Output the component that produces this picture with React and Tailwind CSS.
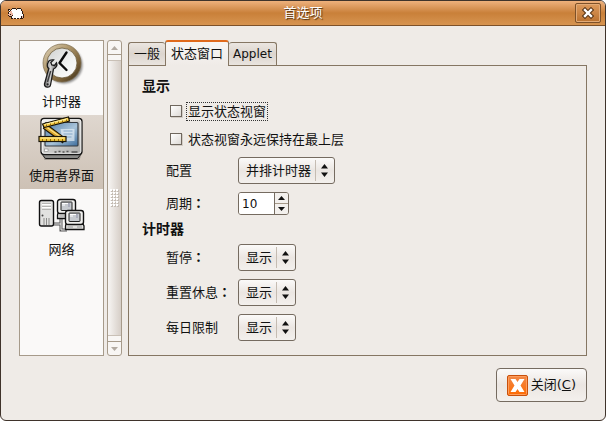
import React, { useState } from 'react'
import { clsx } from 'clsx'

const SHEEP = [
  '....kkkk.kkkk...',
  'kk.kwwwwkwwwwk..',
  'kwkwwwwwwwwwwk..',
  '.kppwwwwwwwwwwk.',
  'kwppwwwwwwwwwwk.',
  'kppppwwwwwwwwwk.',
  'ppkppwwwwwwwwwwk',
  'kpppkwwwwwwwwwwk',
  '.kkkwwwwwwwwwkpk',
  '...kwwwwwwwwwkpk',
  '...kkpkkwkkpkkk.',
]
const SHEEP_COLORS = { k: '#2a1a10', w: '#ffffff', p: '#f0b8a4' }

function SheepIcon() {
  return (
    <svg width="16" height="11" viewBox="0 0 16 11" shapeRendering="crispEdges" aria-hidden="true">
      {SHEEP.map((row, y) =>
        [...row].map((c, x) =>
          c === '.' ? null : <rect key={`${x}-${y}`} x={x} y={y} width="1" height="1" fill={SHEEP_COLORS[c]} />
        )
      )}
    </svg>
  )
}

function ClockIcon() {
  return (
    <svg width="48" height="48" viewBox="0 0 48 48" aria-hidden="true">
      <defs>
        <linearGradient id="rim" x1="0" y1="0" x2="1" y2="1">
          <stop offset="0" stopColor="#e4dac4" />
          <stop offset="0.35" stopColor="#b39c72" />
          <stop offset="0.7" stopColor="#7a6138" />
          <stop offset="1" stopColor="#2f2516" />
        </linearGradient>
        <linearGradient id="face" x1="0" y1="0" x2="1" y2="1">
          <stop offset="0" stopColor="#cfd1d0" />
          <stop offset="0.6" stopColor="#f1f2f1" />
          <stop offset="1" stopColor="#ffffff" />
        </linearGradient>
        <linearGradient id="steel" x1="0" y1="0" x2="1" y2="0">
          <stop offset="0" stopColor="#6f6f6f" />
          <stop offset="0.5" stopColor="#d4d4d4" />
          <stop offset="1" stopColor="#555555" />
        </linearGradient>
        <filter id="soft" x="-20%" y="-20%" width="140%" height="140%">
          <feGaussianBlur stdDeviation="1.3" />
        </filter>
      </defs>
      <circle cx="26" cy="24" r="18.5" fill="#000" opacity="0.45" filter="url(#soft)" />
      <circle cx="24" cy="22" r="19" fill="url(#rim)" stroke="#7b6a4a" strokeWidth="0.7" />
      <circle cx="24" cy="22" r="15" fill="url(#face)" stroke="#6b5a3a" strokeWidth="0.8" />
      <path d="M28.500 11.500L21.500 22L28.500 29" fill="none" stroke="#0a0a0a" strokeWidth="2.4" strokeLinecap="round" strokeLinejoin="round" />
      <path
        d="M10 21.500C10.500 19.500 13 18.500 15.500 19L12.800 21.500L13.800 24L16.500 24.500L18.500 21.800C19.500 24 18.500 27 15.500 28L12.500 44C12 47 6 47 6.500 43L10.800 27.500C9 26 9 23.500 10 21.500Z"
        fill="url(#steel)"
        stroke="#1c1c1c"
        strokeWidth="1.3"
      />
      <path d="M12.700 30L9.500 41" stroke="#3d3d3d" strokeWidth="1.4" />
      <circle cx="9.600" cy="43.300" r="1.100" fill="#222" />
    </svg>
  )
}

function MonitorIcon() {
  return (
    <svg width="48" height="48" viewBox="1.5 1 48 48" aria-hidden="true">
      <defs>
        <linearGradient id="case" x1="0" y1="0" x2="1" y2="1">
          <stop offset="0" stopColor="#f4f4f2" />
          <stop offset="1" stopColor="#a9a9a7" />
        </linearGradient>
        <linearGradient id="screen" x1="0" y1="0" x2="1" y2="1">
          <stop offset="0" stopColor="#4f7ba6" />
          <stop offset="0.55" stopColor="#a9c4da" />
          <stop offset="1" stopColor="#3b6c9c" />
        </linearGradient>
      </defs>
      <path d="M6 40H45L43 46H8Z" fill="#4a4643" opacity="0.4" />
      <path d="M6.500 39H43.500V41.500L41 44.500H9L6.500 41.500Z" fill="#8b8b89" stroke="#161616" />
      <rect x="4.500" y="4.500" width="41" height="36" rx="3" fill="url(#case)" stroke="#161616" strokeWidth="1.300" />
      <rect x="5.700" y="5.700" width="38.600" height="33.600" rx="2" fill="none" stroke="#fff" strokeWidth="0.800" />
      <rect x="8.500" y="8.500" width="33" height="23.500" rx="1" fill="url(#screen)" stroke="#373c42" strokeWidth="1.200" />
      <path d="M24 15H38V27H26Z" fill="#e4eef7" opacity="0.7" />
      <path d="M27 17H36M27 20H36M28 23H35" stroke="#84a7c8" />
      <rect x="8" y="35" width="3.500" height="2.500" fill="#fff" stroke="#777" strokeWidth="0.500" />
      <path d="M18 38H20M22 37.500H24M26 38H28M30 37.500H32M35 38H41" stroke="#555" strokeWidth="1.400" />
      <path d="M8 12L28 27" stroke="#1a1507" strokeWidth="6" />
      <path d="M8.500 12.500L28 26.500" stroke="#dba62c" strokeWidth="4" />
      <path d="M10 13L27 25" stroke="#fbe284" strokeWidth="1.200" />
      <path d="M6 10L32 3L33 7L7.500 13.500Z" fill="#f4c83c" stroke="#1a1507" strokeWidth="1.200" />
      <path d="M8 10.500L31 4.800" stroke="#fff0a6" strokeWidth="1.200" />
      <path d="M10 12.500V10.500M14 11.500V9.500M18 10.500V8.500M22 9.500V7.500M26 8.500V6.500M30 7.500V5.500" stroke="#8d640c" />
      <rect x="2.500" y="22.500" width="27" height="5" fill="#f4c83c" stroke="#1a1507" strokeWidth="1.200" />
      <path d="M4 24H28" stroke="#fff0a6" strokeWidth="1.200" />
      <path d="M6 27V25M10 27V25M14 27V25M18 27V25M22 27V25M26 27V25" stroke="#8d640c" />
    </svg>
  )
}

function SmallComputer({ x, y }) {
  return (
    <g transform={`translate(${x} ${y})`}>
      <path d="M1 14H18L19 16V19.500H0.500V16Z" fill="#e2e2e0" stroke="#111" strokeWidth="1.300" />
      <rect x="0.500" y="0.500" width="18" height="14" rx="2.500" fill="#f1f1ef" stroke="#111" strokeWidth="1.400" />
      <rect x="4" y="3" width="11" height="8.500" rx="0.500" fill="#c6cacf" stroke="#222" />
      <path d="M5 4.500H11M5 6H8" stroke="#fff" />
      <path d="M12 4V8" fill="none" stroke="#8d8fa8" />
      <path d="M2.500 17H8M12 17H17" stroke="#999" />
    </g>
  )
}

function NetworkIcon() {
  return (
    <svg width="48" height="48" viewBox="1 0 48 48" aria-hidden="true">
      <path d="M17 35H24M24 28V41H30" fill="none" stroke="#555" strokeWidth="3" />
      <path d="M17 35H24M24 28V41H30" fill="none" stroke="#eee" />
      <rect x="2.500" y="11.500" width="14" height="25.500" rx="2" fill="#e2e2e0" stroke="#111" strokeWidth="1.400" />
      <path d="M5 14.500H14M5 17.500H14M5 20.500H14" stroke="#b5b5b3" />
      <path d="M5 15.500H14M5 18.500H14" stroke="#fff" />
      <circle cx="5.500" cy="26.500" r="1" fill="#444" />
      <path d="M7 29V36M9.500 29V36M12 29V36" stroke="#8b8b89" />
      <SmallComputer x={20} y={10} />
      <SmallComputer x={28} y={21} />
    </svg>
  )
}

function UpDown() {
  return (
    <svg width="7" height="13" viewBox="0 0 7 13" aria-hidden="true">
      <path d="M3.500 0L7 4.500H0ZM3.500 13L7 8.500H0Z" fill="#111" />
    </svg>
  )
}

function Triangle({ down }) {
  return (
    <svg width="7" height="4" viewBox="0 0 7 4" aria-hidden="true">
      <path d={down ? 'M0 0H7L3.500 4Z' : 'M0 4H7L3.500 0Z'} fill="currentColor" />
    </svg>
  )
}

const SECTIONS = [
  { id: 'timers', label: '计时器', Icon: ClockIcon },
  { id: 'ui', label: '使用者界面', Icon: MonitorIcon },
  { id: 'network', label: '网络', Icon: NetworkIcon },
]

function Sidebar() {
  const [current, setCurrent] = useState('ui')

  return (
    <div className="flex gap-[3px]">
      <nav className="w-[85px] border border-[#a69a8a] bg-[#faf9f8]">
        {SECTIONS.map(({ id, label, Icon }) => (
          <button
            key={id}
            onClick={() => setCurrent(id)}
            className={clsx(
              'flex h-[74px] w-full flex-col items-center whitespace-nowrap leading-4',
              current === id && 'bg-linear-to-b from-[#dfd7cf] to-[#cdc1b5]'
            )}
          >
            <Icon />
            <span className="mt-[5px]">{label}</span>
          </button>
        ))}
      </nav>
      <div className="flex w-[15px] flex-col rounded-[3px] border border-[#a69a8a] bg-[#f8f6f4]">
        <button aria-label="向上" className="flex h-[13px] items-center justify-center text-[#b3aba2]">
          <Triangle />
        </button>
        <div className="flex flex-1 flex-col border-y border-[#a69a8a] py-[5px]">
          <div className="flex flex-1 items-center justify-center border-y border-[#c9c0b6] bg-linear-to-r from-[#f7f5f3] to-[#d6cec7]">
            <svg width="9" height="18" viewBox="0 0 9 18" shapeRendering="crispEdges" aria-hidden="true">
              {[0, 3, 6, 9, 12, 15].map((y) =>
                [0, 3, 6].map((x) => (
                  <g key={`${x}-${y}`}>
                    <rect x={x + 1} y={y + 1} width="2" height="2" fill="#c4bcb3" />
                    <rect x={x} y={y} width="2" height="2" fill="#fff" />
                  </g>
                ))
              )}
            </svg>
          </div>
        </div>
        <button aria-label="向下" className="flex h-[13px] items-center justify-center text-[#b3aba2]">
          <Triangle down />
        </button>
      </div>
    </div>
  )
}

const TABS = [
  { id: 'general', label: '一般', size: 'px-[5px]' },
  { id: 'status', label: '状态窗口', size: 'px-[5px]' },
  { id: 'applet', label: 'Applet', size: 'px-1 text-[12px]' },
]

function Tabs() {
  const [tab, setTab] = useState('status')

  return (
    <div role="tablist" className="relative flex items-end">
      {TABS.map(({ id, label, size }, i) => (
        <button
          key={id}
          role="tab"
          aria-selected={tab === id}
          onClick={() => setTab(id)}
          className={clsx(
            'rounded-t-[3px] border-[#857663]',
            size,
            tab === id
              ? '-mb-px h-[26px] border-x border-t-2 border-t-[#e06a1c] bg-linear-to-b from-[#f8f6f4] to-[#efebe7]'
              : 'h-[23px] border-t bg-linear-to-b from-[#ebe6e1] via-[#dcd5ce] to-[#e9e4df]',
            i === 0 && 'border-l',
            i === TABS.length - 1 && 'border-r'
          )}
        >
          {label}
        </button>
      ))}
    </div>
  )
}

function CheckRow({ id, label, focused }) {
  return (
    <div className="flex h-7 items-center gap-1 pl-7">
      <input
        id={id}
        type="checkbox"
        className="size-3 appearance-none border border-[#6f675e] bg-linear-to-br from-white to-[#dedad6] shadow-[1px_1px_0_#d3cdc6] checked:bg-[#e06a1c]"
      />
      <label
        htmlFor={id}
        className={clsx('border px-px leading-[17px]', focused ? 'border-dotted border-[#333]' : 'border-transparent')}
      >
        {label}
      </label>
    </div>
  )
}

function Row({ id, label, colon, children }) {
  return (
    <div className="flex items-center pl-6">
      <label htmlFor={id} className="w-[72px] whitespace-nowrap">
        {label}
        {colon && <span lang="zh-Hant" className="font-['Noto_Sans_CJK_TC',sans-serif] font-bold leading-none">：</span>}
      </label>
      {children}
    </div>
  )
}

function Select({ id, options, className }) {
  return (
    <div className={clsx('relative', className)}>
      <select
        id={id}
        className="h-[27px] w-full appearance-none rounded-[3px] border border-[#756b60] bg-linear-to-b from-[#fbfaf9] via-[#ebe6e2] to-[#f3f0ed] pl-[7px]"
      >
        {options.map((o) => (
          <option key={o}>{o}</option>
        ))}
      </select>
      <span className="pointer-events-none absolute inset-y-[3px] right-[2px] flex w-[18px] items-center justify-center border-l border-[#c5bcb2]">
        <UpDown />
      </span>
    </div>
  )
}

function SpinBox({ id }) {
  const [value, setValue] = useState(10)

  return (
    <div className="flex h-[23px] w-[51px] overflow-hidden rounded-[3px] border border-[#756b60]">
      <input
        id={id}
        inputMode="numeric"
        value={value}
        onChange={(e) => setValue(Number(e.target.value) || 0)}
        className="min-w-0 flex-1 bg-white pl-[3px] text-[12px] outline-none"
      />
      <div className="flex w-[14px] flex-col border-l border-[#756b60] bg-[#f3f0ed]">
        <button aria-label="增加" onClick={() => setValue(value + 1)} className="flex flex-1 items-center justify-center border-b border-[#a69a8a]">
          <Triangle />
        </button>
        <button aria-label="减少" onClick={() => setValue(value - 1)} className="flex flex-1 items-center justify-center">
          <Triangle down />
        </button>
      </div>
    </div>
  )
}

const SHOW = ['显示', '隐藏']

export default function App() {
  return (
    <div className="flex min-h-screen flex-col overflow-hidden rounded-[6px] border border-[#3f332b] bg-[#efebe7] font-['DejaVu_Sans','Noto_Sans_CJK_SC',sans-serif] text-[13px] text-[#111]">
      <header className="grid h-[25px] grid-cols-[26px_1fr_26px] items-center border-b border-[#7d5129] bg-linear-to-b from-[#eeb17c] via-[#c98039] to-[#d79450] px-1">
        <span className="pl-[3px]">
          <SheepIcon />
        </span>
        <h1 className="text-center leading-5 text-white [text-shadow:1px_1px_1px_#4a2b10]">首选项</h1>
        <button
          aria-label="关闭窗口"
          className="flex h-5 items-center justify-center rounded-[2px] border border-[#7d5129] bg-linear-to-b from-[#dc9a5c] to-[#bb722f] shadow-[inset_0_0_0_1px_#e3ab77]"
        >
          <svg width="12" height="12" viewBox="0 0 12 12" aria-hidden="true">
            <path d="M3 3L9 9M9 3L3 9" stroke="#5a3718" strokeWidth="4.500" strokeLinecap="square" />
            <path d="M3 3L9 9M9 3L3 9" stroke="#fff" strokeWidth="2.400" strokeLinecap="square" />
          </svg>
        </button>
      </header>

      <main className="flex flex-1 flex-col px-[18px] pt-[14px] pb-[18px]">
        <div className="flex flex-1 gap-[6px]">
          <Sidebar />
          <section className="flex flex-1 flex-col">
            <Tabs />
            <div className="flex-1 border border-[#857663] px-[13px] pt-[9px]">
              <h2 className="text-[14px] leading-[22px] font-bold">显示</h2>
              <CheckRow id="show-status" label="显示状态视窗" focused />
              <CheckRow id="on-top" label="状态视窗永远保持在最上层" />
              <div className="mt-1 flex flex-col gap-2">
                <Row id="layout" label="配置">
                  <Select id="layout" options={['并排计时器']} className="w-[97px]" />
                </Row>
                <Row id="cycle" label="周期" colon>
                  <SpinBox id="cycle" />
                </Row>
              </div>
              <h2 className="mt-[3px] text-[14px] leading-[22px] font-bold">计时器</h2>
              <div className="mt-1 flex flex-col gap-2">
                <Row id="micro" label="暂停" colon>
                  <Select id="micro" options={SHOW} className="w-[58px]" />
                </Row>
                <Row id="rest" label="重置休息" colon>
                  <Select id="rest" options={SHOW} className="w-[58px]" />
                </Row>
                <Row id="daily" label="每日限制">
                  <Select id="daily" options={SHOW} className="w-[58px]" />
                </Row>
              </div>
            </div>
          </section>
        </div>

        <footer className="mt-3 flex justify-end">
          <button className="flex h-[34px] items-center gap-[3px] rounded-[4px] border border-[#756b60] bg-linear-to-b from-[#fbfaf9] via-[#ebe6e2] to-[#f3f0ed] px-[10px]">
            <svg width="21" height="21" viewBox="0 0 21 21" aria-hidden="true">
              <defs>
                <linearGradient id="orange" x1="0" y1="0" x2="0" y2="1">
                  <stop offset="0" stopColor="#f08a4c" />
                  <stop offset="1" stopColor="#ff6a00" />
                </linearGradient>
              </defs>
              <rect x="0.500" y="0.500" width="20" height="20" rx="1.500" fill="url(#orange)" stroke="#c8500c" />
              <rect x="1.500" y="1.500" width="18" height="18" rx="1" fill="none" stroke="#ff9d5c" />
              <path d="M3.500 4H8.500L10.500 7L12.500 4H17.500L13.500 10.500L17.500 17H12.500L10.500 14L8.500 17H3.500L7.500 10.500Z" fill="#fff" />
            </svg>
            <span>
              关闭(<u>C</u>)
            </span>
          </button>
        </footer>
      </main>
    </div>
  )
}
